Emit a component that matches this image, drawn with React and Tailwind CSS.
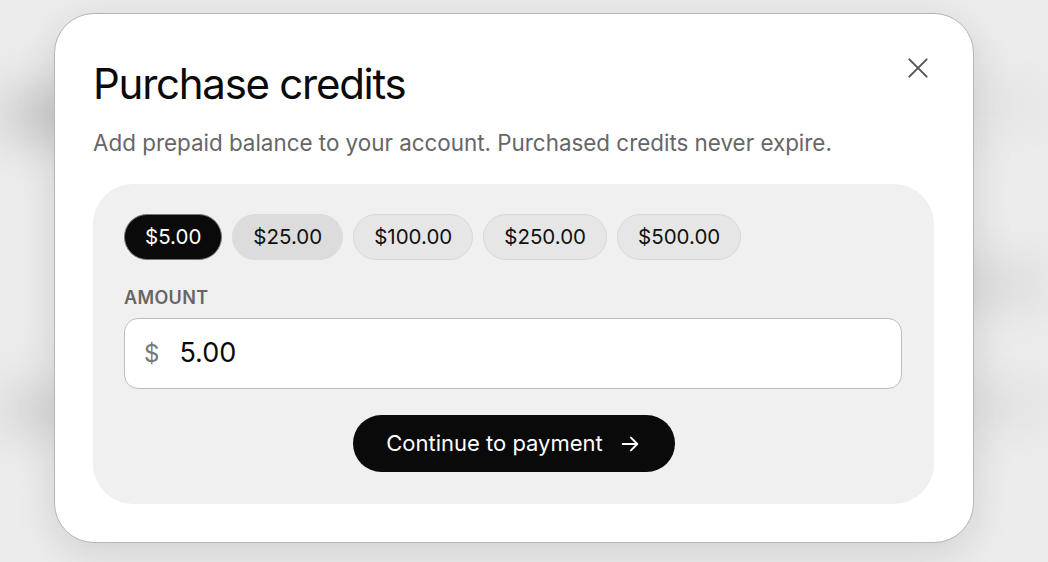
import React from "react";
import { useState } from "react";

const presets = ["5.00", "25.00", "100.00", "250.00", "500.00"];

function App() {
	const [amount, setAmount] = useState("5.00");

	return (
		<div className="relative w-[1048px] h-[562px] overflow-hidden bg-[#ececec] font-['Inter',sans-serif]">
			{/* blurred page behind the dialog */}
			<div className="w-full h-full flex flex-col gap-10 pt-[90px] blur-xl">
				<div className="flex justify-between">
					<div className="w-[90px] h-[50px] bg-[#c4c4c4] rounded-full"></div>
					<div className="w-[120px] h-[30px] bg-[#e0e0e0] rounded-full"></div>
				</div>
				<div className="flex justify-end pt-[90px]">
					<div className="w-[110px] h-[30px] bg-[#d2d2d2] rounded-full"></div>
				</div>
				<div className="flex justify-between pt-[50px]">
					<div className="w-[80px] h-[40px] bg-[#cdcdcd] rounded-full"></div>
					<div className="w-[100px] h-[30px] bg-[#dadada] rounded-full"></div>
				</div>
			</div>

			<div className="absolute left-[54px] top-[13px] w-[920px] h-[530px] bg-white rounded-[40px] border border-[#b5b5b5] shadow-[0_10px_40px_rgba(0,0,0,0.12)] px-[38px] pt-[45px]">
				<button
					type="button"
					className="absolute right-[40px] top-[39px] w-[30px] h-[30px] flex items-center justify-center text-[#555]"
				>
					<svg width="26" height="26" viewBox="0 0 24 24" fill="none" stroke="currentColor" strokeWidth="1.8" strokeLinecap="round">
						<path d="M4 4 20 20M20 4 4 20" />
					</svg>
				</button>
				<h1 className="text-[42px] leading-[50px] font-normal tracking-[-0.03em] text-[#0a0a0a]">
					Purchase credits
				</h1>
				<p className="mt-[19px] text-[22.4px] leading-[30px] text-[#666]">
					Add prepaid balance to your account. Purchased credits never expire.
				</p>

				<div className="mt-[26px] w-[841px] h-[320px] bg-[#f0f0f0] rounded-[40px] pt-[30px] px-[31px]">
					<div className="flex gap-[10px]">
						{presets.map((p) => (
							<button
								key={p}
								type="button"
								onClick={() => setAmount(p)}
								className={`h-[46px] px-[20px] rounded-full text-[20.5px] border ${
									amount === p
										? "bg-[#0a0a0a] text-white border-[#777]"
										: p === "25.00"
											? "bg-[#dcdcdc] text-[#111] border-[#dcdcdc]"
											: "bg-[#e6e6e6] text-[#111] border-[#d8d8d8]"
								}`}
							>
								${p}
							</button>
						))}
					</div>

					<label className="block mt-[26px] text-[18px] leading-[24px] font-semibold tracking-[0.02em] text-[#666]">
						AMOUNT
					</label>
					<div className="mt-[8px] w-[778px] h-[71px] bg-white border border-[#bdbdbd] rounded-[14px] flex items-center px-[19px]">
						<span className="text-[24px] text-[#777]">$</span>
						<input
							value={amount}
							onChange={(e) => setAmount(e.target.value)}
							className="ml-[20px] flex-1 text-[27px] text-[#0a0a0a] outline-none bg-transparent"
						/>
					</div>

					<div className="mt-[26px] flex justify-center">
						<button
							type="button"
							className="h-[57px] w-[322px] rounded-full bg-[#0a0a0a] text-white text-[22px] flex items-center justify-center gap-[16px]"
						>
							Continue to payment
							<svg width="22" height="22" viewBox="0 0 24 24" fill="none" stroke="currentColor" strokeWidth="2" strokeLinecap="round" strokeLinejoin="round">
								<path d="M4 12h16M13 5l7 7-7 7" />
							</svg>
						</button>
					</div>
				</div>
			</div>
		</div>
	);
}

export default App;
